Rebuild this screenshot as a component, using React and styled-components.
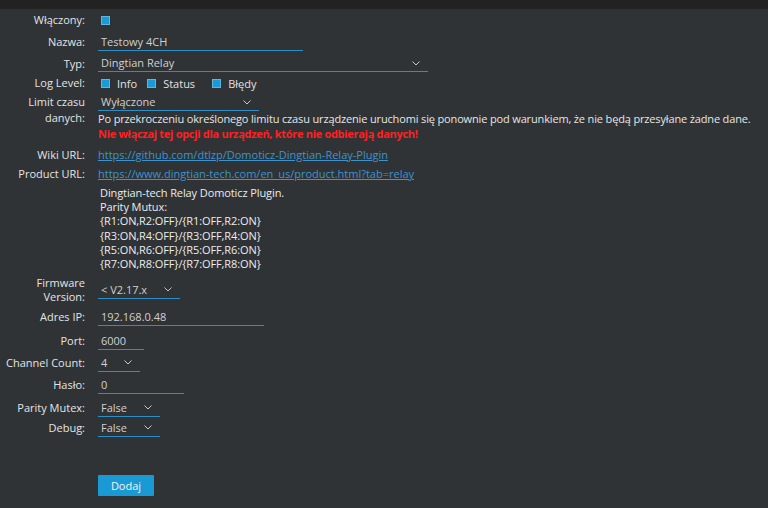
import React from "react"
import styled, { createGlobalStyle } from "styled-components"

const Global = createGlobalStyle`
  html, body {
    margin: 0;
    padding: 0;
    background: #2f3336;
  }
  body {
    font-family: "Open Sans", "Liberation Sans", sans-serif;
    font-size: 11px;
    color: #e2e2e2;
  }
`

const TopBar = styled.div`
  height: 9px;
  background: #222222;
`

const Form = styled.div`
  display: flex;
  flex-direction: column;
  width: 768px;
  height: 499px;
  box-sizing: border-box;
`

const Row = styled.div`
  display: flex;
  box-sizing: border-box;
  align-items: ${p => (p.top ? "flex-start" : "center")};
  height: ${p => (p.h ? `${p.h}px` : "auto")};
  margin-top: ${p => p.mt || 0}px;
  padding-top: ${p => p.pt || 0}px;
`

const Label = styled.div`
  width: 85px;
  flex: none;
  text-align: right;
  line-height: ${p => p.lh || 14}px;
  color: #e4e4e4;
  padding-right: 13px;
  white-space: nowrap;
`

const Value = styled.div`
  display: flex;
  flex-direction: ${p => (p.col ? "column" : "row")};
  align-items: ${p => (p.col ? "flex-start" : "center")};
`

const Input = styled.div`
  width: ${p => p.w}px;
  height: 17px;
  box-sizing: border-box;
  border-bottom: 1px solid #2b8fc6;
  padding: 0 0 0 3px;
  color: #d0d0d0;
  line-height: 16px;
  display: flex;
  align-items: center;
  justify-content: space-between;
`

const Chevron = styled.svg`
  width: 8px;
  height: 5px;
  margin-right: 8px;
  flex: none;
`

const Select = ({ w, children }) => (
  <Input w={w}>
    <span>{children}</span>
    <Chevron viewBox="0 0 8 5">
      <path d="M0.5 0.5 L4 4 L7.5 0.5" fill="none" stroke="#c8c8c8" strokeWidth="1" />
    </Chevron>
  </Input>
)

const Box = styled.span`
  display: inline-block;
  width: 9px;
  height: 9px;
  box-sizing: border-box;
  background: #1b9ad6;
  border: 1px solid #5fb6df;
  margin-right: ${p => p.mr || 0}px;
  margin-left: ${p => p.ml || 0}px;
`

const CheckLabel = styled.span`
  color: #e2e2e2;
  margin-right: ${p => p.mr || 0}px;
`

const Text = styled.div`
  line-height: ${p => p.lh || 15}px;
  color: ${p => (p.warn ? "#ff2121" : "#e6e6e6")};
  font-weight: ${p => (p.warn ? 700 : 400)};
  white-space: nowrap;
  letter-spacing: ${p => (p.warn ? "-0.3px" : "-0.15px")};
`

const Link = styled.a`
  color: #3f93cc;
  text-decoration: underline;
  line-height: 16px;
`

const Desc = styled.div`
  color: #ececec;
  line-height: 14.2px;
  padding-left: 2px;
  letter-spacing: -0.1px;
`

const Button = styled.button`
  margin-left: 98px;
  width: 56px;
  height: 21px;
  border: none;
  border-radius: 1px;
  background: #1a9ad5;
  color: #f4f4f4;
  font-family: inherit;
  font-size: 11px;
  padding: 0;
`

export default function App() {
  return (
    <>
      <Global />
      <TopBar />
      <Form>
        <Row h={22}>
          <Label>Włączony:</Label>
          <Value>
            <Box ml={3} />
          </Value>
        </Row>
        <Row h={22}>
          <Label>Nazwa:</Label>
          <Input w={205}>Testowy 4CH</Input>
        </Row>
        <Row h={21}>
          <Label>Typ:</Label>
          <Select w={330}>Dingtian Relay</Select>
        </Row>
        <Row h={18}>
          <Label>Log Level:</Label>
          <Value>
            <Box ml={3} mr={7} />
            <CheckLabel mr={10}>Info</CheckLabel>
            <Box mr={7} />
            <CheckLabel mr={17}>Status</CheckLabel>
            <Box mr={7} />
            <CheckLabel>Błędy</CheckLabel>
          </Value>
        </Row>
        <Row top pt={2} h={50}>
          <Label lh={16}>
            Limit czasu
            <br />
            danych:
          </Label>
          <Value col>
            <Select w={161}>Wyłączone</Select>
            <Text>
              Po przekroczeniu określonego limitu czasu urządzenie uruchomi się ponownie pod
              warunkiem, że nie będą przesyłane żadne dane.
            </Text>
            <Text warn>Nie włączaj tej opcji dla urządzeń, które nie odbierają danych!</Text>
          </Value>
        </Row>
        <Row h={22} mt={2}>
          <Label>Wiki URL:</Label>
          <Link href="#">https://github.com/dtlzp/Domoticz-Dingtian-Relay-Plugin</Link>
        </Row>
        <Row h={16}>
          <Label>Product URL:</Label>
          <Link href="#">https://www.dingtian-tech.com/en_us/product.html?tab=relay</Link>
        </Row>
        <Row top mt={4}>
          <Label />
          <Desc>
            Dingtian-tech Relay Domoticz Plugin.
            <br />
            Parity Mutux:
            <br />
            {"{R1:ON,R2:OFF}/{R1:OFF,R2:ON}"}
            <br />
            {"{R3:ON,R4:OFF}/{R3:OFF,R4:ON}"}
            <br />
            {"{R5:ON,R6:OFF}/{R5:OFF,R6:ON}"}
            <br />
            {"{R7:ON,R8:OFF}/{R7:OFF,R8:ON}"}
          </Desc>
        </Row>
        <Row h={28} mt={5}>
          <Label>
            Firmware
            <br />
            Version:
          </Label>
          <Select w={82}>&lt; V2.17.x</Select>
        </Row>
        <Row h={22} mt={2}>
          <Label>Adres IP:</Label>
          <Input w={166}>192.168.0.48</Input>
        </Row>
        <Row h={22} mt={2}>
          <Label>Port:</Label>
          <Input w={46}>6000</Input>
        </Row>
        <Row h={22}>
          <Label>Channel Count:</Label>
          <Select w={42}>4</Select>
        </Row>
        <Row h={22}>
          <Label>Hasło:</Label>
          <Input w={86}>0</Input>
        </Row>
        <Row h={22} mt={1}>
          <Label>Parity Mutex:</Label>
          <Select w={62}>False</Select>
        </Row>
        <Row h={18}>
          <Label>Debug:</Label>
          <Select w={62}>False</Select>
        </Row>
        <Row mt={38}>
          <Button>Dodaj</Button>
        </Row>
      </Form>
    </>
  )
}
